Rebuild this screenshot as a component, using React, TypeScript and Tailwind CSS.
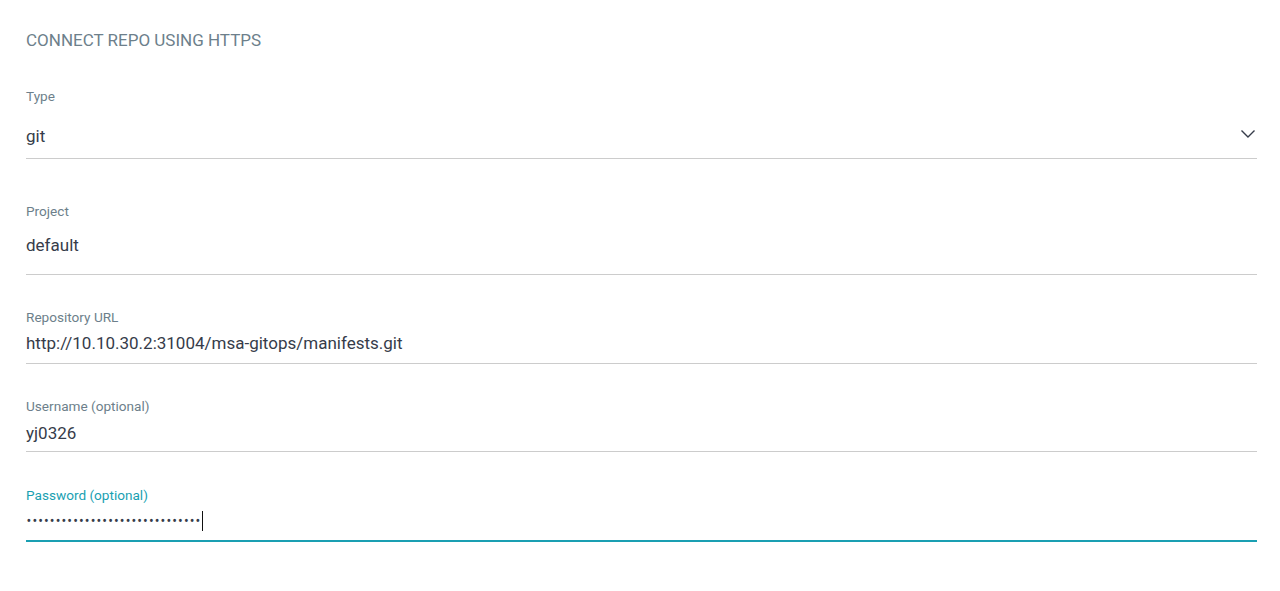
import React from "react";

const font = { fontFamily: "Roboto, 'Noto Sans', sans-serif" };

function Field({
  label,
  value,
  labelTop,
  valueGap,
  pb,
  focused,
  select,
  password,
}: {
  label: string;
  value: string;
  labelTop: string;
  valueGap: string;
  pb: string;
  focused?: boolean;
  select?: boolean;
  password?: boolean;
}) {
  return (
    <div className={labelTop}>
      <div
        className={
          "h-4 text-[13.6px] leading-4 " +
          (focused ? "text-[#1a9fb2]" : "text-[#6d7f8b]")
        }
      >
        {label}
      </div>
      <div
        className={
          "flex items-center justify-between " +
          valueGap +
          " " +
          pb +
          " " +
          (focused ? "border-b-2 border-[#1a9fb2]" : "border-b border-[#cccccc]")
        }
      >
        <div className="h-5 text-[17px] leading-5 text-[#363c4a] flex items-center">
          {password ? (
            <>
              <span className="flex">
                {Array.from({ length: 30 }).map((_, i) => (
                  <span key={i} className="inline-block w-[5.83px] text-[14px] leading-5 text-center text-[#363c4a]">
                    •
                  </span>
                ))}
              </span>
              <span className="ml-[1px] inline-block w-[1.5px] h-[20px] bg-[#111]" />
            </>
          ) : (
            value
          )}
        </div>
        {select && (
          <svg
            width="16"
            height="16"
            viewBox="0 0 16 16"
            className="mr-[1px] -mt-[4px]"
            fill="none"
          >
            <path d="M1.5 4.5 L8 11 L14.5 4.5" stroke="#363c4a" strokeWidth="1.4" />
          </svg>
        )}
      </div>
    </div>
  );
}

export default function App() {
  return (
    <div className="w-[1280px] h-[591px] bg-white pl-[26px] pr-[23px] pt-[30px]" style={font}>
      <div className="h-5 text-[17px] leading-5 text-[#6d7f8b] uppercase">
        Connect repo using HTTPS
      </div>
      <Field label="Type" value="git" labelTop="mt-[38px]" valueGap="pt-[22px]" pb="pb-[12px]" select />
      <Field label="Project" value="default" labelTop="mt-[44px]" valueGap="pt-[16px]" pb="pb-[19px]" />
      <Field
        label="Repository URL"
        value="http://10.10.30.2:31004/msa-gitops/manifests.git"
        labelTop="mt-[34px]"
        valueGap="pt-[8px]"
        pb="pb-[10px]"
      />
      <Field label="Username (optional)" value="yj0326" labelTop="mt-[34px]" valueGap="pt-[9px]" pb="pb-[8px]" />
      <Field
        label="Password (optional)"
        value=""
        labelTop="mt-[35px]"
        valueGap="pt-[8px]"
        pb="pb-[9px]"
        focused
        password
      />
    </div>
  );
}
